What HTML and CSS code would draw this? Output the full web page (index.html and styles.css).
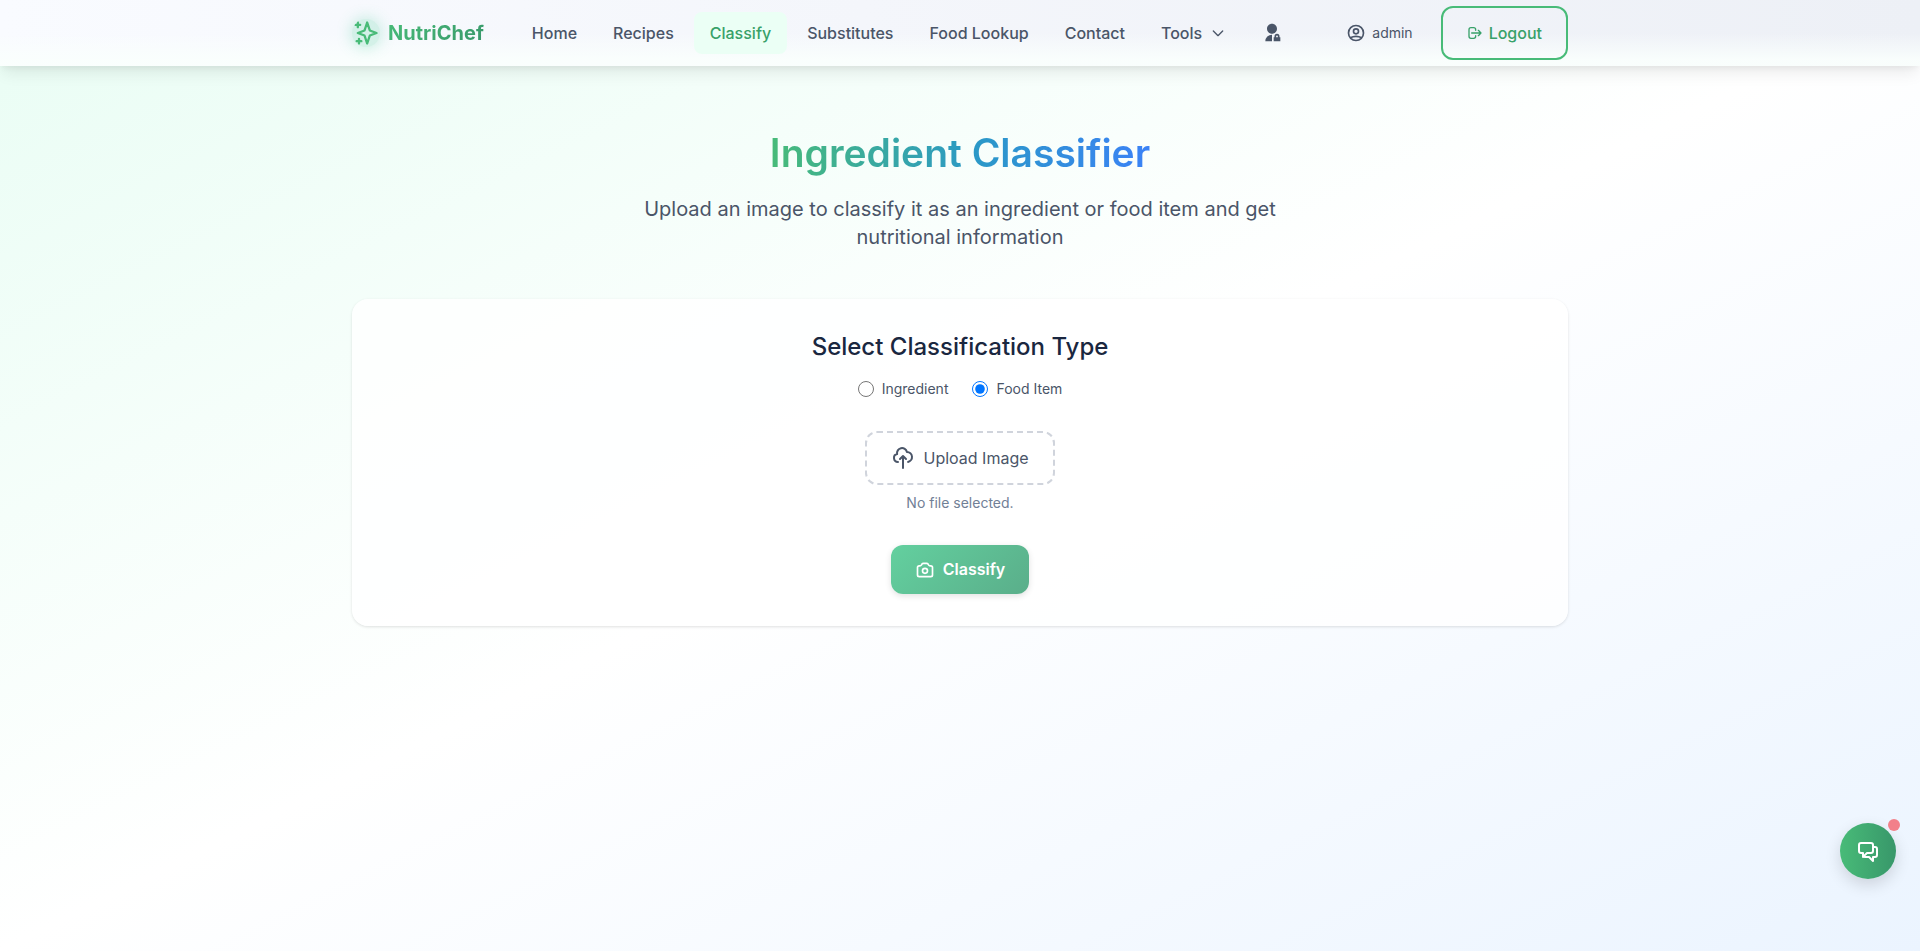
FILE: index.html
```html
<!DOCTYPE html>
<html lang="en">
<head>
<meta charset="utf-8">
<meta name="viewport" content="width=device-width, initial-scale=1">
<title>NutriChef - Ingredient Classifier</title>
<link rel="stylesheet" href="styles.css">
</head>
<body>
<header class="header">
  <div class="container header-inner">
    <a class="brand" href="#">
      <svg class="icon icon-brand" viewBox="0 0 24 24"><path d="M5 3v4M3 5h4M6 17v4m-2-2h4m5-16l2.286 6.857L21 12l-5.714 2.143L13 21l-2.286-6.857L5 12l5.714-2.143L13 3z"/></svg>
      <span class="brand-name">NutriChef</span>
    </a>
    <nav class="nav">
      <a class="nav-link" href="#">Home</a>
      <a class="nav-link" href="#">Recipes</a>
      <a class="nav-link active" href="#">Classify</a>
      <a class="nav-link" href="#">Substitutes</a>
      <a class="nav-link" href="#">Food Lookup</a>
      <a class="nav-link" href="#">Contact</a>
      <button class="nav-link nav-tools" type="button">Tools
        <svg class="icon icon-16" viewBox="0 0 24 24"><path d="M19 9l-7 7-7-7"/></svg>
      </button>
      <a class="nav-link nav-admin" href="#" aria-label="Admin">
        <svg class="icon-solid" viewBox="0 0 24 24"><path d="M12 14v8H4a8 8 0 0 1 8-8zm0-1c-3.315 0-6-2.685-6-6s2.685-6 6-6 6 2.685 6 6-2.685 6-6 6zm9 4h1v5h-8v-5h1v-1a3 3 0 0 1 6 0v1zm-2 0v-1a1 1 0 0 0-2 0v1h2z"/></svg>
      </a>
    </nav>
    <div class="account">
      <a class="user" href="#">
        <svg class="icon icon-20" viewBox="0 0 24 24"><path d="M5.121 17.804A13.937 13.937 0 0112 16c2.5 0 4.847.655 6.879 1.804M15 10a3 3 0 11-6 0 3 3 0 016 0zm6 2a9 9 0 11-18 0 9 9 0 0118 0z"/></svg>
        <span>admin</span>
      </a>
      <button class="logout" type="button">
        <svg class="icon icon-16" viewBox="0 0 24 24"><path d="M17 16l4-4m0 0l-4-4m4 4H7m6 4v1a3 3 0 01-3 3H6a3 3 0 01-3-3V7a3 3 0 013-3h4a3 3 0 013 3v1"/></svg>
        Logout
      </button>
    </div>
  </div>
</header>

<main class="container main">
  <div class="intro">
    <h1 class="title">Ingredient Classifier</h1>
    <p class="subtitle">Upload an image to classify it as an ingredient or food item and get nutritional information</p>
  </div>
  <form class="card">
    <h2 class="card-title" id="type-title">Select Classification Type</h2>
    <div class="choices" role="radiogroup" aria-labelledby="type-title">
      <label class="choice" for="type-ingredient"><input class="radio" type="radio" id="type-ingredient" name="type">Ingredient</label>
      <label class="choice" for="type-food"><input class="radio" type="radio" id="type-food" name="type" checked>Food Item</label>
    </div>
    <button class="upload" type="button">
      <svg class="icon icon-24" viewBox="0 0 24 24"><path d="M7 16a4 4 0 01-.88-7.903A5 5 0 1115.9 6L16 6a5 5 0 011 9.9M15 13l-3-3m0 0l-3 3m3-3v12"/></svg>
      Upload Image
    </button>
    <p class="file-note">No file selected.</p>
    <button class="submit" type="button">
      <svg class="icon icon-20" viewBox="0 0 24 24"><path d="M3 9a2 2 0 012-2h.93a2 2 0 001.664-.89l.812-1.22A2 2 0 0110.07 4h3.86a2 2 0 011.664.89l.812 1.22A2 2 0 0018.07 7H19a2 2 0 012 2v9a2 2 0 01-2 2H5a2 2 0 01-2-2V9z"/><path d="M15 13a3 3 0 11-6 0 3 3 0 016 0z"/></svg>
      Classify
    </button>
  </form>
</main>

<button class="chat" type="button" aria-label="Open chat">
  <svg class="icon icon-24" viewBox="0 0 24 24"><path d="M17 8h2a2 2 0 012 2v6a2 2 0 01-2 2h-2v4l-4-4H9a1.994 1.994 0 01-1.414-.586m0 0L11 14h4a2 2 0 002-2V6a2 2 0 00-2-2H5a2 2 0 00-2 2v6a2 2 0 002 2h2v4l.586-.586z"/></svg>
  <span class="chat-dot"></span>
</button>
</body>
</html>
```
FILE: styles.css
```css
* { box-sizing: border-box; }

body {
  margin: 0;
  min-height: 100vh;
  font-family: Inter, "Liberation Sans", sans-serif;
  font-size: 16px;
  line-height: 24px;
  color: #4a5568;
  background: linear-gradient(to bottom right, #e9fdf4 0%, #ffffff 50%, #ebf4ff 100%);
}

h1, h2, p { margin: 0; }
a { color: inherit; text-decoration: none; }
button { font: inherit; color: inherit; background: none; border: 0; cursor: pointer; }

.container {
  width: 100%;
  max-width: 1280px;
  margin: 0 auto;
  padding: 0 32px;
}

.icon {
  flex: none;
  fill: none;
  stroke: currentColor;
  stroke-width: 2;
  stroke-linecap: round;
  stroke-linejoin: round;
}
.icon-16 { width: 16px; height: 16px; }
.icon-20 { width: 20px; height: 20px; }
.icon-24 { width: 24px; height: 24px; }
.icon-solid { width: 20px; height: 20px; fill: currentColor; display: block; }

.header {
  position: sticky;
  top: 0;
  background:
    linear-gradient(180deg, rgba(255, 255, 255, 0) 50%, rgba(250, 255, 253, 0.9) 90%),
    linear-gradient(90deg, #f9fbff 0%, #f4f6fb 45%, #edf0f6 100%);
  box-shadow: 0 10px 15px -3px rgba(0, 0, 0, 0.08), 0 4px 6px -2px rgba(0, 0, 0, 0.05);
}
.header-inner {
  display: flex;
  align-items: center;
  gap: 32px;
  height: 66px;
}

.brand { display: flex; align-items: center; gap: 8px; }
.icon-brand {
  width: 28px;
  height: 28px;
  color: #48bb78;
  border-radius: 50%;
  background: rgba(72, 207, 150, 0.2);
  box-shadow: 0 0 14px 2px rgba(72, 207, 150, 0.25);
}
.brand-name {
  font-size: 20px;
  line-height: 28px;
  font-weight: 700;
  color: transparent;
  background: linear-gradient(135deg, #48bb78, #38976a);
  background-clip: text;
  -webkit-background-clip: text;
}

.nav { display: flex; align-items: center; gap: 4px; font-weight: 500; }
.nav-link {
  display: flex;
  align-items: center;
  padding: 9px 16px;
  border-radius: 8px;
}
.nav-link.active { color: #38a169; background: #ebfff5; }
.nav-tools { gap: 8px; }

.account { display: flex; align-items: center; gap: 28px; margin-left: auto; }
.user { display: flex; align-items: center; gap: 6px; font-size: 14px; line-height: 20px; }
.logout {
  display: flex;
  align-items: center;
  gap: 6px;
  padding: 13px 24px;
  border: 2px solid #48bb78;
  border-radius: 12px;
  color: #38a169;
  font-weight: 500;
}

.main { padding-top: 64px; padding-bottom: 48px; }
.intro {
  display: flex;
  flex-direction: column;
  align-items: center;
  gap: 19px;
  max-width: 672px;
  margin: 0 auto 48px;
  text-align: center;
}
.title {
  font-size: 39px;
  line-height: 46px;
  font-weight: 600;
  color: transparent;
  background: linear-gradient(90deg, #48bb78, #2b98c8 55%, #3b82f6);
  background-clip: text;
  -webkit-background-clip: text;
}
.subtitle { font-size: 20px; line-height: 28px; }

.card {
  display: flex;
  flex-direction: column;
  align-items: center;
  padding: 32px;
  border-radius: 16px;
  background: rgba(255, 255, 255, 0.8);
  box-shadow: 0 1px 3px rgba(0, 0, 0, 0.12);
}
.card-title { font-size: 24px; line-height: 32px; font-weight: 500; color: #1a2740; }
.choices { display: flex; gap: 24px; margin: 16px 0 32px; font-size: 14px; line-height: 20px; }
.choice { display: flex; align-items: center; gap: 8px; }
.radio { width: 16px; height: 16px; margin: 0; }
.upload {
  display: flex;
  align-items: center;
  gap: 8px;
  padding: 13px 24px;
  border: 2px dashed #d0d4dc;
  border-radius: 12px;
}
.file-note { margin: 8px 0 32px; font-size: 14px; line-height: 20px; color: #718096; }
.submit {
  display: flex;
  align-items: center;
  gap: 8px;
  padding: 12px 24px;
  border-radius: 12px;
  color: #ffffff;
  font-weight: 600;
  line-height: 25px;
  background: linear-gradient(135deg, #63d09f, #5aae8a);
  box-shadow: 0 2px 6px rgba(0, 0, 0, 0.12);
}

.chat {
  position: fixed;
  right: 24px;
  bottom: 72px;
  display: grid;
  place-items: center;
  width: 56px;
  height: 56px;
  padding: 0;
  border-radius: 50%;
  color: #ffffff;
  background: linear-gradient(90deg, #48bb78, #38976a);
  box-shadow: 0 6px 16px rgba(0, 0, 0, 0.14);
}
.chat-dot {
  position: absolute;
  top: -4px;
  right: -4px;
  width: 12px;
  height: 12px;
  border-radius: 50%;
  background: #f2808a;
}
```
